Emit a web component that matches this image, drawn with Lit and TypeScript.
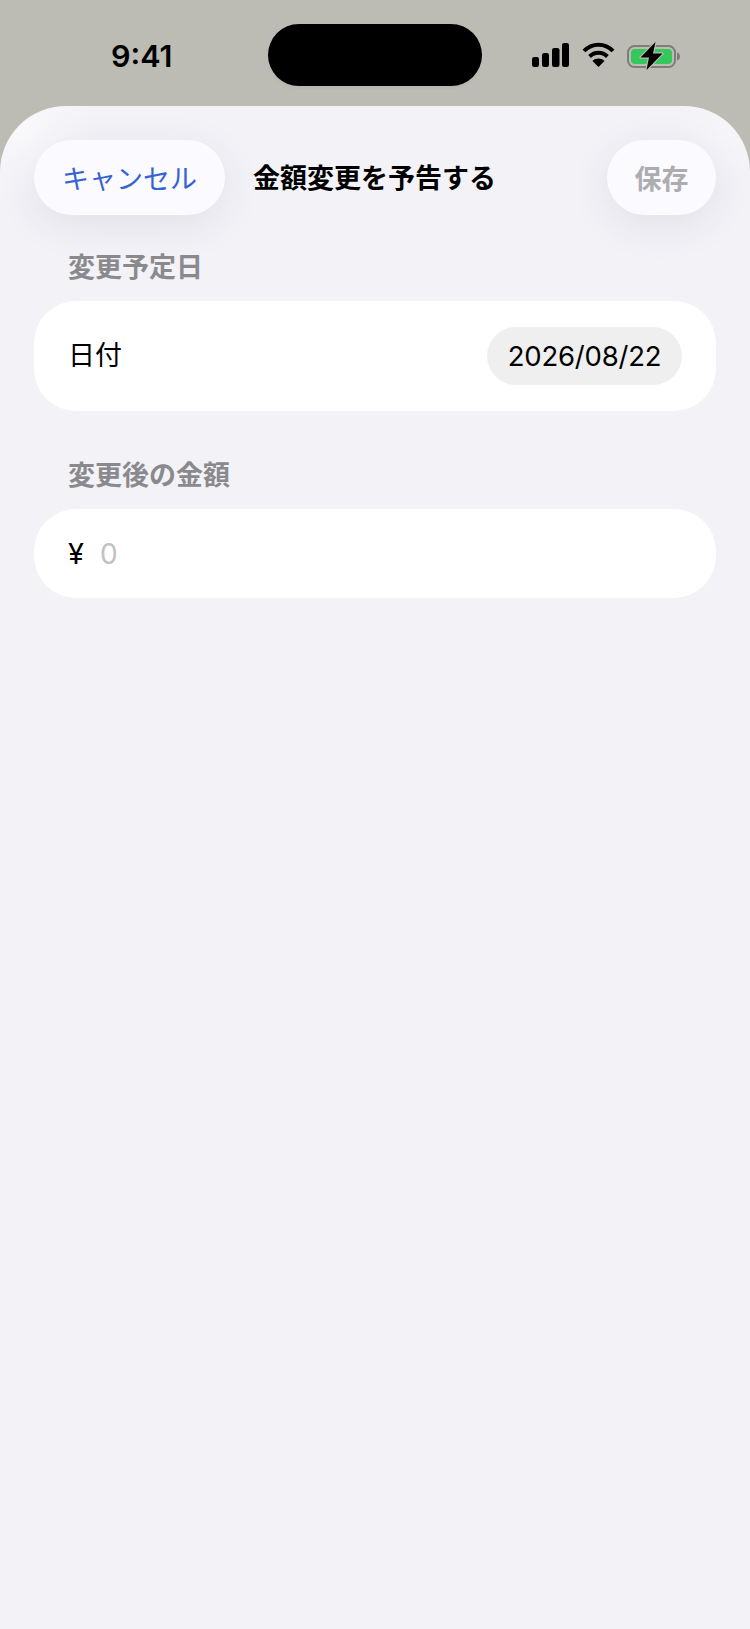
import { LitElement, html, css } from "lit";
import { customElement } from "lit/decorators.js";

@customElement("app-root")
export class AppRoot extends LitElement {
  static styles = css`
    :host {
      display: block;
      width: 750px;
      height: 1629px;
      overflow: hidden;
      background: #bcbbb4;
      font-family: Inter, "Noto Sans CJK JP", sans-serif;
      color: #000;
    }
    .status {
      position: relative;
      height: 106px;
      display: flex;
      align-items: flex-start;
      justify-content: space-between;
      padding: 36px 0 0 111px;
      box-sizing: border-box;
    }
    .time {
      font-size: 30.5px;
      font-weight: 600;
      line-height: 40px;
      width: 60px;
      white-space: nowrap;
    }
    .island {
      position: absolute;
      left: 268px;
      top: 23.5px;
      width: 214px;
      height: 62.5px;
      border-radius: 32px;
      background: #000;
      box-shadow: 0 3px 3px rgba(0, 0, 0, 0.025);
    }
    .icons {
      display: flex;
      align-items: flex-start;
      gap: 11px;
      padding: 6px 70px 0 0;
    }
    .signal { margin-right: 2px; }
    svg { display: block; }
    .sheet {
      height: 1523px;
      box-sizing: border-box;
      background:
        radial-gradient(circle at 22px 22px, #f9f9fc 0, rgba(242, 242, 247, 0) 75px),
        radial-gradient(circle at 728px 22px, #f6f6fa 0, rgba(242, 242, 247, 0) 55px),
        #f2f2f7;
      border-radius: 66px 66px 0 0;
      padding: 34px 34px 0;
      overflow: hidden;
    }
    .nav {
      display: flex;
      align-items: center;
      height: 75px;
    }
    .pill {
      height: 75px;
      border-radius: 37.5px;
      background: #fafaff;
      display: flex;
      align-items: center;
      justify-content: center;
      font-size: 27px;
      box-shadow: 0 10px 40px rgba(60, 60, 80, 0.09);
      flex: none;
    }
    .cancel {
      width: 191px;
      color: #3563d0;
    }
    .save {
      width: 109px;
      color: #adadaf;
      font-weight: 600;
      font-size: 27px;
    }
    .title {
      flex: 1;
      padding: 2px 0 0 28px;
      font-size: 27px;
      font-weight: 700;
      line-height: 36px;
      white-space: nowrap;
    }
    .label {
      margin: 0;
      padding-left: 34px;
      font-size: 27px;
      font-weight: 600;
      line-height: 36px;
      color: #8a8a8e;
      white-space: nowrap;
    }
    .label.first { margin-top: 35px; }
    .label.second { margin-top: 47px; }
    .card {
      background: #fff;
      border-radius: 42px;
      display: flex;
      align-items: center;
      box-sizing: border-box;
      padding: 0 34px 0 34px;
      font-size: 27px;
    }
    .date-card {
      height: 110px;
      margin-top: 15px;
      justify-content: space-between;
    }
    .field-name { padding-bottom: 5px; }
    .date {
      width: 195px;
      height: 58px;
      border-radius: 29px;
      background: #efefef;
      display: flex;
      align-items: center;
      justify-content: center;
      font-size: 27.5px;
      letter-spacing: -0.2px;
      white-space: nowrap;
    }
    .amount-card {
      height: 89px;
      margin-top: 15px;
      gap: 16px;
    }
    .yen { font-weight: 400; font-size: 29px; }
    .zero { color: #c1c1c3; font-size: 28px; }
  `;

  render() {
    return html`
      <div class="status">
        <span class="time">9:41</span>
        <div class="island"></div>
        <div class="icons">
          <svg class="signal" width="37" height="25" viewBox="0 0 37 25" aria-hidden="true">
            <rect x="0" y="15" width="7" height="10" rx="2.2" fill="#000"></rect>
            <rect x="10" y="11" width="7" height="14" rx="2.2" fill="#000"></rect>
            <rect x="20" y="6" width="7.500" height="19" rx="2.2" fill="#000"></rect>
            <rect x="30" y="1" width="7" height="24" rx="2.2" fill="#000"></rect>
          </svg>
          <svg width="33" height="25" viewBox="0 0 33 25" aria-hidden="true">
            <path d="M2 9C10 0.500 23 0.500 31 9" fill="none" stroke="#000" stroke-width="4"></path>
            <path d="M7.600 14.500C12.600 9.500 20.400 9.500 25.400 14.500" fill="none" stroke="#000" stroke-width="4"></path>
            <path d="M16.500 25L10.500 19C14 15.800 19 15.800 22.500 19Z" fill="#000"></path>
          </svg>
          <svg width="54" height="28" viewBox="0 0 54 28" aria-hidden="true">
            <rect x="2" y="4" width="47" height="21" rx="6.500" fill="none" stroke="#7d7d79" stroke-width="2"></rect>
            <rect x="5" y="7" width="41" height="15" rx="4" fill="#34c759"></rect>
            <path d="M51 10.500c2 .4 3 2 3 4s-1 3.600-3 4Z" fill="#7d7d79"></path>
            <path d="M29.500 0L14.500 15.500H23L20.500 28L36.500 11.500H27Z" fill="#000" stroke="#bcbbb4" stroke-width="2.400" paint-order="stroke" stroke-linejoin="round"></path>
          </svg>
        </div>
      </div>
      <div class="sheet">
        <div class="nav">
          <div class="pill cancel">キャンセル</div>
          <div class="title">金額変更を予告する</div>
          <div class="pill save">保存</div>
        </div>
        <p class="label first">変更予定日</p>
        <div class="card date-card">
          <span class="field-name">日付</span>
          <span class="date">2026/08/22</span>
        </div>
        <p class="label second">変更後の金額</p>
        <div class="card amount-card">
          <span class="yen">¥</span>
          <span class="zero">0</span>
        </div>
      </div>
    `;
  }
}
